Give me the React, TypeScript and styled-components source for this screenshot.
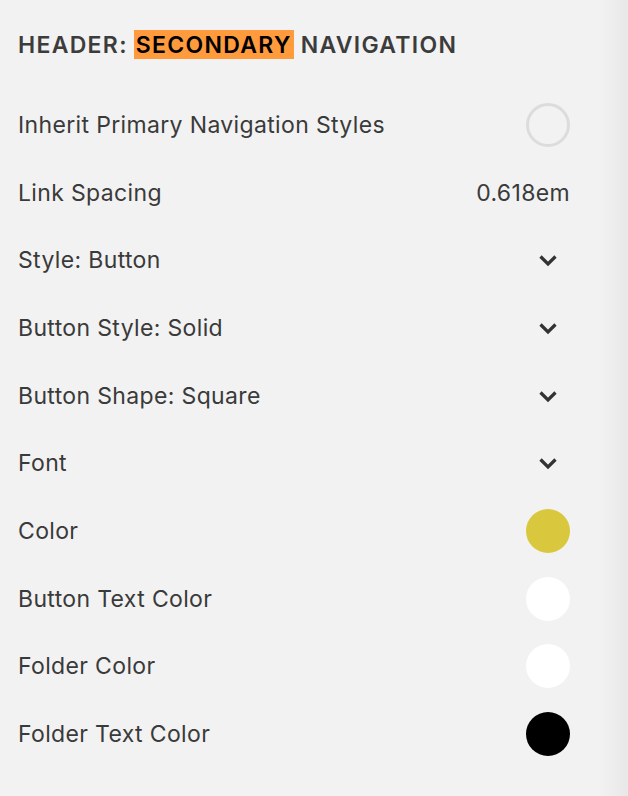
import React from 'react'
import styled, { createGlobalStyle } from 'styled-components'

const Global = createGlobalStyle`
  html, body {
    margin: 0;
    padding: 0;
  }
  body {
    background: linear-gradient(to right, #f2f2f2 598px, #e8e8e8 628px);
    font-family: Inter, 'Liberation Sans', sans-serif;
    color: #3a3a3a;
    -webkit-font-smoothing: antialiased;
  }
`

const Panel = styled.div`
  width: 628px;
  height: 796px;
  box-sizing: border-box;
  padding: 30px 58px 0 18px;
`

const Title = styled.h2`
  margin: 0 0 32px 0;
  height: 29px;
  display: flex;
  align-items: center;
  font-size: 23px;
  font-weight: 600;
  letter-spacing: 1.3px;
  color: #3c3c3c;
  white-space: nowrap;
`

const Mark = styled.span`
  background: #ff9a3d;
  color: #000;
  padding: 0 2px 0 2px;
  height: 29px;
  display: inline-flex;
  align-items: center;
  margin: 0 7px 0 6px;
`

const List = styled.div`
  display: flex;
  flex-direction: column;
`

const Row = styled.div`
  height: 67.7px;
  display: flex;
  align-items: center;
  justify-content: space-between;
`

const Label = styled.span`
  font-size: 23px;
  font-weight: 400;
  letter-spacing: 0.35px;
  color: #3a3a3a;
`

const Value = styled.span`
  font-size: 23px;
  letter-spacing: 0.35px;
  color: #3a3a3a;
`

const Swatch = styled.span<{ $color: string }>`
  width: 44px;
  height: 44px;
  border-radius: 50%;
  background: ${(p) => p.$color};
`

const Toggle = styled.span`
  width: 44px;
  height: 44px;
  box-sizing: border-box;
  border-radius: 50%;
  border: 3px solid #dcdcdc;
`

const ChevronBox = styled.span`
  width: 44px;
  display: flex;
  justify-content: center;
`

const Chevron = () => (
  <ChevronBox>
    <svg width="20" height="14" viewBox="0 0 20 14">
      <path d="M2.5 3.5 L10 11 L17.5 3.5" fill="none" stroke="#333" strokeWidth="3.2" />
    </svg>
  </ChevronBox>
)

type Kind =
  | { type: 'toggle' }
  | { type: 'value'; value: string }
  | { type: 'select' }
  | { type: 'color'; color: string }

const rows: Array<{ label: string; kind: Kind }> = [
  { label: 'Inherit Primary Navigation Styles', kind: { type: 'toggle' } },
  { label: 'Link Spacing', kind: { type: 'value', value: '0.618em' } },
  { label: 'Style: Button', kind: { type: 'select' } },
  { label: 'Button Style: Solid', kind: { type: 'select' } },
  { label: 'Button Shape: Square', kind: { type: 'select' } },
  { label: 'Font', kind: { type: 'select' } },
  { label: 'Color', kind: { type: 'color', color: '#d9c83e' } },
  { label: 'Button Text Color', kind: { type: 'color', color: '#ffffff' } },
  { label: 'Folder Color', kind: { type: 'color', color: '#ffffff' } },
  { label: 'Folder Text Color', kind: { type: 'color', color: '#000000' } },
]

const Control = ({ kind }: { kind: Kind }) => {
  if (kind.type === 'toggle') return <Toggle />
  if (kind.type === 'value') return <Value>{kind.value}</Value>
  if (kind.type === 'select') return <Chevron />
  return <Swatch $color={kind.color} />
}

export default function App() {
  return (
    <>
      <Global />
      <Panel>
        <Title>
          HEADER:<Mark>SECONDARY</Mark>NAVIGATION
        </Title>
        <List>
          {rows.map((row) => (
            <Row key={row.label}>
              <Label>{row.label}</Label>
              <Control kind={row.kind} />
            </Row>
          ))}
        </List>
      </Panel>
    </>
  )
}
